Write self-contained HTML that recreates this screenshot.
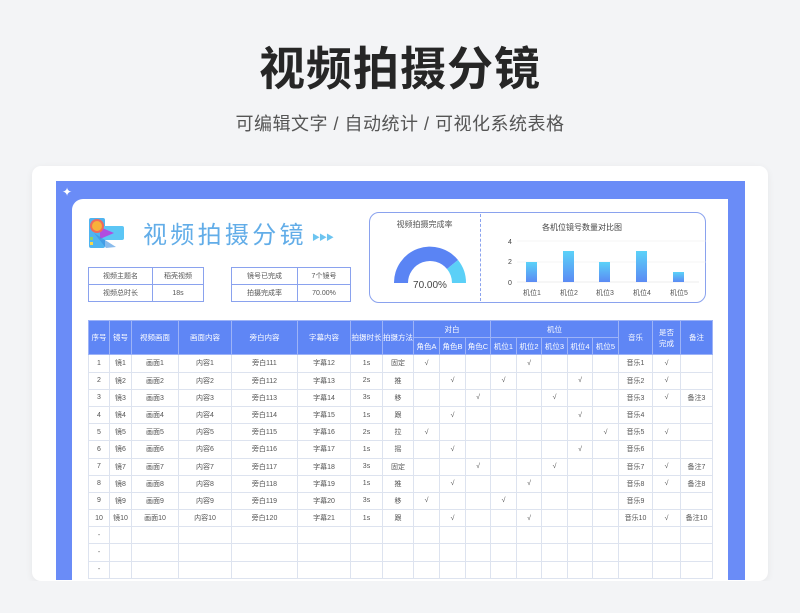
<!DOCTYPE html>
<html><head><meta charset="utf-8">
<style>
*{margin:0;padding:0;box-sizing:border-box}
body{width:800px;height:613px;background:#f3f4f6;font-family:"Liberation Sans","Noto Sans CJK SC",sans-serif;position:relative;overflow:hidden}
.abs{position:absolute}
h1{position:absolute;left:0;width:800px;top:40px;text-align:center;font-size:46px;font-weight:bold;color:#262626;letter-spacing:1px;line-height:58px}
.sub{position:absolute;left:0;width:800px;top:112px;text-align:center;font-size:18px;color:#555;line-height:24px;letter-spacing:0.5px}
.card{left:32px;top:166px;width:736px;height:415px;background:#fff;border-radius:9px;box-shadow:0 2px 8px rgba(0,0,0,.06)}
.blue{left:56px;top:181px;width:689px;height:399px;background:#6a8cf7}
.inner{left:72px;top:199px;width:656px;height:381px;background:#fff;border-radius:11px 0 0 0}
.info{border-collapse:collapse;font-size:7px;color:#555;position:absolute}
.info td{border:1px solid #8aa2ee;text-align:center;height:17px}
.tbl{position:absolute;left:88px;top:320px;border-collapse:collapse;table-layout:fixed;font-size:7px;color:#555}
.tbl td,.tbl th{text-align:center;border:1px solid #dde3ef;height:17.2px;padding:0;overflow:hidden;white-space:nowrap}
.tbl th{background:#5f86f5;color:#fff;font-weight:normal;border:1px solid #9db3f7;font-size:7.5px}
.tbl{border:1px solid #6a8cf7}
</style></head><body>
<h1>视频拍摄分镜</h1>
<div class="sub">可编辑文字 / 自动统计 / 可视化系统表格</div>
<div class="abs card"></div>
<div class="abs blue"></div>
<div class="abs" style="left:62px;top:186px;color:#fff;font-size:12px;line-height:12px">✦</div>
<div class="abs inner"></div>

<!-- logo -->
<svg class="abs" style="left:86px;top:215px" width="42" height="36" viewBox="0 0 42 36">
<rect x="3" y="3" width="16" height="30" rx="2" fill="#4fb4f0"/>
<rect x="14" y="11" width="24" height="14" rx="2" fill="#5cc6f5"/>
<polygon points="14,12 28,18 14,24" fill="#b04de0"/>
<polygon points="8,18 30,32 20,33" fill="#3a8de0" opacity=".6"/>
<circle cx="11" cy="11" r="7" fill="#f06a5a"/>
<circle cx="11" cy="11" r="5" fill="#f8b13a"/>
<rect x="4" y="22" width="3" height="3" fill="#8ad26a"/>
<rect x="4" y="27" width="3" height="3" fill="#f8d84a"/>
</svg>
<div class="abs" style="left:143px;top:220px;font-size:24px;letter-spacing:3.3px;color:#62ade8;line-height:32px">视频拍摄分镜</div>
<div class="abs" style="left:312px;top:232px;font-size:8px;color:#6cc4f0;letter-spacing:-1px">▶▶▶</div>

<table class="info" style="left:88px;top:267px;width:116px">
<tr><td style="width:64px">视频主题名</td><td>稻壳视频</td></tr>
<tr><td>视频总时长</td><td>18s</td></tr></table>
<table class="info" style="left:231px;top:267px;width:120px">
<tr><td style="width:66px">镜号已完成</td><td>7个镜号</td></tr>
<tr><td>拍摄完成率</td><td>70.00%</td></tr></table>

<!-- chart panel -->
<div class="abs" style="left:369px;top:212px;width:337px;height:91px;border:1.5px solid #8aa2ee;border-radius:10px"></div>
<div class="abs" style="left:480px;top:214px;height:87px;border-left:1px dashed #8aa2ee"></div>
<div class="abs" style="left:369px;top:219px;width:111px;text-align:center;font-size:8px;color:#555">视频拍摄完成率</div>
<svg class="abs" style="left:369px;top:212px" width="337" height="91" viewBox="0 0 337 91">
<path d="M25 71 A36 36 0 0 1 89 48 L78 57 A22 22 0 0 0 39 71 Z" fill="#5a84f4"/>
<path d="M89 48 A36 36 0 0 1 97 71 L83 71 A22 22 0 0 0 78 57 Z" fill="#5bd0f7"/>
<text x="61" y="76" font-size="10" fill="#444" text-anchor="middle" font-family="Liberation Sans">70.00%</text>
<text x="213" y="18" font-size="8" fill="#444" text-anchor="middle" font-family="Liberation Sans,Noto Sans CJK SC">各机位镜号数量对比图</text>
<line x1="148" y1="29" x2="337" y2="29" stroke="#eee" stroke-width=".6"/>
<line x1="148" y1="50" x2="337" y2="50" stroke="#eee" stroke-width=".6"/>
<line x1="148" y1="70" x2="330" y2="70" stroke="#ddd" stroke-width=".6"/>
<text x="139" y="32" font-size="7" fill="#444" font-family="Liberation Sans">4</text>
<text x="139" y="52" font-size="7" fill="#444" font-family="Liberation Sans">2</text>
<text x="139" y="73" font-size="7" fill="#444" font-family="Liberation Sans">0</text>
<defs><linearGradient id="g" x1="0" y1="0" x2="0" y2="1"><stop offset="0" stop-color="#5bd2f8"/><stop offset="1" stop-color="#5b8af4"/></linearGradient></defs>
<rect x="157" y="50" width="11" height="20" fill="url(#g)"/>
<rect x="194" y="39" width="11" height="31" fill="url(#g)"/>
<rect x="230" y="50" width="11" height="20" fill="url(#g)"/>
<rect x="267" y="39" width="11" height="31" fill="url(#g)"/>
<rect x="304" y="60" width="11" height="10" fill="url(#g)"/>
<g font-size="7" fill="#555" text-anchor="middle" font-family="Liberation Sans,Noto Sans CJK SC">
<text x="163" y="83">机位1</text><text x="200" y="83">机位2</text><text x="236" y="83">机位3</text><text x="273" y="83">机位4</text><text x="310" y="83">机位5</text></g>
</svg>

<table class="tbl">
<colgroup><col style="width:21px"><col style="width:22px"><col style="width:47px"><col style="width:53px"><col style="width:66px"><col style="width:53px"><col style="width:32px"><col style="width:31px"><col style="width:26px"><col style="width:26px"><col style="width:25px"><col style="width:26px"><col style="width:25px"><col style="width:26px"><col style="width:25px"><col style="width:26px"><col style="width:34px"><col style="width:28px"><col style="width:32px"></colgroup>
<tr><th rowspan="2">序号</th><th rowspan="2">镜号</th><th rowspan="2">视频画面</th><th rowspan="2">画面内容</th><th rowspan="2">旁白内容</th><th rowspan="2">字幕内容</th><th rowspan="2">拍摄时长</th><th rowspan="2">拍摄方法</th><th colspan="3">对白</th><th colspan="5">机位</th><th rowspan="2">音乐</th><th rowspan="2">是否<br>完成</th><th rowspan="2">备注</th></tr>
<tr><th>角色A</th><th>角色B</th><th>角色C</th><th>机位1</th><th>机位2</th><th>机位3</th><th>机位4</th><th>机位5</th></tr>
<tr><td>1</td><td>镜1</td><td>画面1</td><td>内容1</td><td>旁白111</td><td>字幕12</td><td>1s</td><td>固定</td><td>√</td><td></td><td></td><td></td><td>√</td><td></td><td></td><td></td><td>音乐1</td><td>√</td><td></td></tr>
<tr><td>2</td><td>镜2</td><td>画面2</td><td>内容2</td><td>旁白112</td><td>字幕13</td><td>2s</td><td>推</td><td></td><td>√</td><td></td><td>√</td><td></td><td></td><td>√</td><td></td><td>音乐2</td><td>√</td><td></td></tr>
<tr><td>3</td><td>镜3</td><td>画面3</td><td>内容3</td><td>旁白113</td><td>字幕14</td><td>3s</td><td>移</td><td></td><td></td><td>√</td><td></td><td></td><td>√</td><td></td><td></td><td>音乐3</td><td>√</td><td>备注3</td></tr>
<tr><td>4</td><td>镜4</td><td>画面4</td><td>内容4</td><td>旁白114</td><td>字幕15</td><td>1s</td><td>跟</td><td></td><td>√</td><td></td><td></td><td></td><td></td><td>√</td><td></td><td>音乐4</td><td></td><td></td></tr>
<tr><td>5</td><td>镜5</td><td>画面5</td><td>内容5</td><td>旁白115</td><td>字幕16</td><td>2s</td><td>拉</td><td>√</td><td></td><td></td><td></td><td></td><td></td><td></td><td>√</td><td>音乐5</td><td>√</td><td></td></tr>
<tr><td>6</td><td>镜6</td><td>画面6</td><td>内容6</td><td>旁白116</td><td>字幕17</td><td>1s</td><td>摇</td><td></td><td>√</td><td></td><td></td><td></td><td></td><td>√</td><td></td><td>音乐6</td><td></td><td></td></tr>
<tr><td>7</td><td>镜7</td><td>画面7</td><td>内容7</td><td>旁白117</td><td>字幕18</td><td>3s</td><td>固定</td><td></td><td></td><td>√</td><td></td><td></td><td>√</td><td></td><td></td><td>音乐7</td><td>√</td><td>备注7</td></tr>
<tr><td>8</td><td>镜8</td><td>画面8</td><td>内容8</td><td>旁白118</td><td>字幕19</td><td>1s</td><td>推</td><td></td><td>√</td><td></td><td></td><td>√</td><td></td><td></td><td></td><td>音乐8</td><td>√</td><td>备注8</td></tr>
<tr><td>9</td><td>镜9</td><td>画面9</td><td>内容9</td><td>旁白119</td><td>字幕20</td><td>3s</td><td>移</td><td>√</td><td></td><td></td><td>√</td><td></td><td></td><td></td><td></td><td>音乐9</td><td></td><td></td></tr>
<tr><td>10</td><td>镜10</td><td>画面10</td><td>内容10</td><td>旁白120</td><td>字幕21</td><td>1s</td><td>跟</td><td></td><td>√</td><td></td><td></td><td>√</td><td></td><td></td><td></td><td>音乐10</td><td>√</td><td>备注10</td></tr>
<tr><td>-</td><td></td><td></td><td></td><td></td><td></td><td></td><td></td><td></td><td></td><td></td><td></td><td></td><td></td><td></td><td></td><td></td><td></td><td></td></tr>
<tr><td>-</td><td></td><td></td><td></td><td></td><td></td><td></td><td></td><td></td><td></td><td></td><td></td><td></td><td></td><td></td><td></td><td></td><td></td><td></td></tr>
<tr><td>-</td><td></td><td></td><td></td><td></td><td></td><td></td><td></td><td></td><td></td><td></td><td></td><td></td><td></td><td></td><td></td><td></td><td></td><td></td></tr>
</table>
<div class="abs" style="left:0;top:581px;width:800px;height:32px;background:#f3f4f6"></div>
</body></html>
